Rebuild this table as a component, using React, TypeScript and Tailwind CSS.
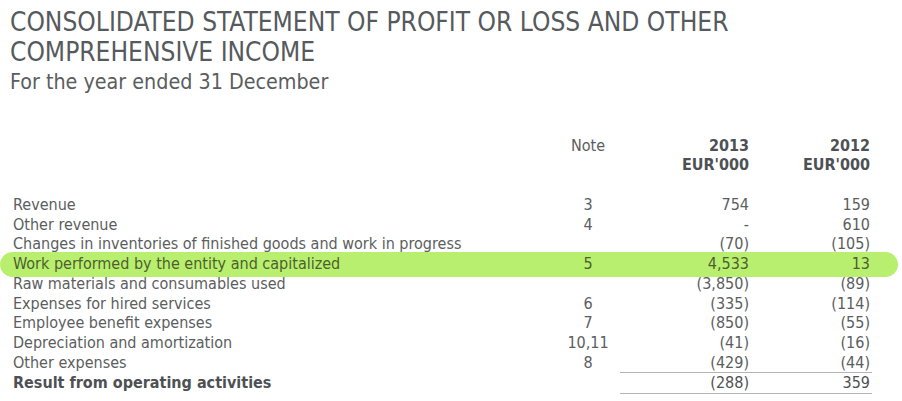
const rows: { label: string; note: string; y13: string; y12: string; hl?: boolean; line?: boolean; bold?: boolean }[] = [
  { label: "Revenue", note: "3", y13: "754", y12: "159" },
  { label: "Other revenue", note: "4", y13: "-", y12: "610" },
  { label: "Changes in inventories of finished goods and work in progress", note: "", y13: "(70)", y12: "(105)" },
  { label: "Work performed by the entity and capitalized", note: "5", y13: "4,533", y12: "13", hl: true },
  { label: "Raw materials and consumables used", note: "", y13: "(3,850)", y12: "(89)" },
  { label: "Expenses for hired services", note: "6", y13: "(335)", y12: "(114)" },
  { label: "Employee benefit expenses", note: "7", y13: "(850)", y12: "(55)" },
  { label: "Depreciation and amortization", note: "10,11", y13: "(41)", y12: "(16)" },
  { label: "Other expenses", note: "8", y13: "(429)", y12: "(44)", line: true },
  { label: "Result from operating activities", note: "", y13: "(288)", y12: "359", line: true, bold: true },
];

export default function App() {
  return (
    <div
      className="relative isolate w-[902px] h-[401px] overflow-hidden bg-white text-[#5b5e60]"
      style={{ fontFamily: '"DejaVu Sans Condensed", "DejaVu Sans", Verdana, sans-serif' }}
    >
      {/* heading */}
      <div className="pl-[10px] pt-[7px]">
        <h1 className="text-[26.1px] leading-[30px] font-normal text-[#565a5d]">
          CONSOLIDATED STATEMENT OF PROFIT OR LOSS AND OTHER
          <br />
          COMPREHENSIVE INCOME
        </h1>
        <p className="text-[21.3px] leading-[30px] text-[#5b5e60]">For the year ended 31 December</p>
      </div>

      {/* column header */}
      <div className="mt-[39px] flex pr-[30px] text-[16px] leading-[19px]">
        <div className="flex-1" />
        <div className="w-[64px] text-center">Note</div>
        <div className="w-[252px] flex pr-[2px] font-bold text-[#4e5154]">
          <div className="w-[129px] text-right">
            2013
            <br />
            EUR'000
          </div>
          <div className="flex-1 text-right">
            2012
            <br />
            EUR'000
          </div>
        </div>
      </div>

      {/* rows */}
      <div className="mt-[21px] text-[16px] leading-[19.7px]">
        {rows.map((r) => (
          <div key={r.label} className={`relative flex pr-[30px] ${r.bold ? "font-bold text-[#4e5154]" : ""} ${r.hl ? "text-[#4d5f2e]" : ""}`}>
            {r.hl && <div className="absolute -z-10 left-0 w-[898px] -top-[2px] -bottom-[3px] rounded-full bg-[#b9ef6f]" />}
            <div className="flex-1 pl-[13px] whitespace-nowrap">{r.label}</div>
            <div className="w-[64px] text-center font-normal">{r.note}</div>
            <div className={`w-[252px] flex pr-[2px] font-normal ${r.line ? "border-b border-[#b5b5b5]" : ""}`}>
              <div className="w-[129px] text-right">{r.y13}</div>
              <div className="flex-1 text-right">{r.y12}</div>
            </div>
          </div>
        ))}
      </div>
    </div>
  );
}
